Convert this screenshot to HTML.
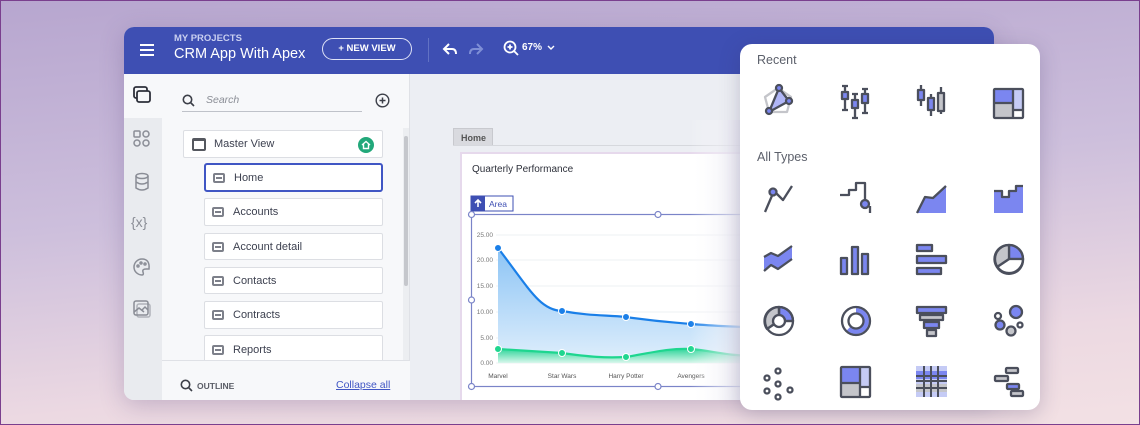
<!DOCTYPE html>
<html><head><meta charset="utf-8"><style>
*{box-sizing:border-box;margin:0;padding:0}
body{width:1140px;height:425px;overflow:hidden;font-family:"Liberation Sans",sans-serif;position:relative;background:linear-gradient(175deg,#b7a6cf 0%,#cdbfdc 45%,#ecd9e2 80%,#f3e1e4 100%)}
.frame{position:absolute;inset:0;border:1px solid #7a3f8e;pointer-events:none;z-index:50}
.abs{position:absolute}
.win{position:absolute;left:124px;top:27px;width:870px;height:373px;border-radius:10px;overflow:hidden;background:#eceef3;box-shadow:0 6px 24px rgba(80,60,120,.25)}
.hdr{position:absolute;left:0;top:0;width:870px;height:47px;background:#3e4fb3;color:#fff}
.rail{position:absolute;left:0;top:47px;width:38px;height:326px;background:#e9ebef}
.panel{position:absolute;left:38px;top:47px;width:248px;height:326px;background:#f7f8fa;border-right:1px solid #dfe1e6}
.item{position:absolute;background:#fff;border:1px solid #dcdee3;border-radius:2px;font-size:11px;color:#3d4150;display:flex;align-items:center}
.pg{width:12px;height:10px;border:2px solid #7d808a;border-radius:2px;margin:0 9px 0 7px;position:relative}
.pg:after{content:"";position:absolute;left:1px;right:1px;top:2px;height:2px;background:#7d808a}
.pop{position:absolute;left:740px;top:44px;width:300px;height:366px;background:#fff;border-radius:12px;box-shadow:0 4px 20px rgba(60,50,100,.25);z-index:10}
.lbl{font-size:12.5px;color:#5c606b;position:absolute;left:17px}
</style></head><body>
<div class="win">
 <div class="hdr">
  <div class="abs" style="left:16px;top:17px;width:14px;height:2px;background:#fff;box-shadow:0 5px 0 #fff,0 10px 0 #fff"></div>
  <div class="abs" style="left:50px;top:6px;font-size:9.5px;font-weight:bold;color:#c9cff0">MY PROJECTS</div>
  <div class="abs" style="left:50px;top:19px;font-size:14.5px">CRM App With Apex</div>
  <div class="abs" style="left:198px;top:11px;width:90px;height:22px;border:1.5px solid #dfe3f7;border-radius:12px;font-size:9.5px;font-weight:bold;text-align:center;line-height:19px">+ NEW VIEW</div>
  <div class="abs" style="left:304px;top:11px;width:1px;height:24px;background:#6272c4"></div>
  <svg class="abs" style="left:318px;top:14px" width="16" height="16" viewBox="0 0 16 16"><path d="M7 3 L2 8 L7 13 M3 8 H10 Q14 8 14 13" stroke="#fff" stroke-width="2" fill="none"/></svg>
  <svg class="abs" style="left:344px;top:14px" width="16" height="16" viewBox="0 0 16 16"><path d="M9 3 L14 8 L9 13 M13 8 H6 Q2 8 2 13" stroke="#7f8fd6" stroke-width="2" fill="none"/></svg>
  <svg class="abs" style="left:379px;top:13px" width="17" height="17" viewBox="0 0 17 17"><circle cx="7" cy="7" r="5.5" stroke="#fff" stroke-width="1.8" fill="none"/><path d="M11 11 L15 15 M4.5 7 H9.5 M7 4.5 V9.5" stroke="#fff" stroke-width="1.8"/></svg>
  <div class="abs" style="left:398px;top:15px;font-size:10px;font-weight:bold">67%</div>
  <svg class="abs" style="left:423px;top:18px" width="8" height="6"><path d="M1 1 L4 4 L7 1" stroke="#fff" stroke-width="1.4" fill="none"/></svg>
 </div>
 <div class="rail">
  <div class="abs" style="left:0;top:0;width:38px;height:44px;background:#f7f8fa"></div>
  <svg class="abs" style="left:8px;top:11px" width="20" height="20" viewBox="0 0 20 20"><rect x="2" y="2" width="13" height="11" rx="2" stroke="#2d303a" stroke-width="1.8" fill="none"/><rect x="5" y="6" width="13" height="11" rx="2" stroke="#2d303a" stroke-width="1.8" fill="#f7f8fa"/></svg>
  <svg class="abs" style="left:8px;top:55px" width="20" height="20" viewBox="0 0 20 20" fill="none" stroke="#8a8d96" stroke-width="1.5"><rect x="2" y="2" width="6" height="6" rx="1"/><circle cx="14" cy="5" r="3"/><circle cx="5" cy="14" r="3"/><circle cx="14" cy="14" r="3"/></svg>
  <svg class="abs" style="left:8px;top:98px" width="20" height="20" viewBox="0 0 20 20" fill="none" stroke="#8a8d96" stroke-width="1.5"><ellipse cx="10" cy="4" rx="6" ry="2.5"/><path d="M4 4 V16 Q10 20 16 16 V4 M4 10 Q10 14 16 10"/></svg>
  <div class="abs" style="left:7px;top:140px;font-size:14px;color:#8a8d96">{x}</div>
  <svg class="abs" style="left:8px;top:183px" width="20" height="20" viewBox="0 0 20 20" fill="none" stroke="#8a8d96" stroke-width="1.5"><path d="M10 2 A8 8 0 1 0 10 18 Q12 18 11 15 Q10 12 14 12 L17 12 Q18 2 10 2Z"/><circle cx="6" cy="9" r="1"/><circle cx="9" cy="6" r="1"/><circle cx="13" cy="7" r="1"/></svg>
  <svg class="abs" style="left:8px;top:225px" width="20" height="20" viewBox="0 0 20 20" fill="none" stroke="#8a8d96" stroke-width="1.5"><rect x="2" y="2" width="14" height="14" rx="2"/><path d="M2 13 L7 9 L12 13 M10 11 L13 8 L16 11"/><rect x="5" y="5" width="13" height="13" rx="2" stroke-opacity=".6"/></svg>
 </div>
 <div class="panel">
  <svg class="abs" style="left:20px;top:20px" width="13" height="13" viewBox="0 0 13 13"><circle cx="5.5" cy="5.5" r="4.2" stroke="#3c3f48" stroke-width="1.6" fill="none"/><path d="M8.5 8.5 L12 12" stroke="#3c3f48" stroke-width="1.6"/></svg>
  <div class="abs" style="left:44px;top:20px;font-size:10.5px;color:#8b8e96;font-style:italic">Search</div>
  <div class="abs" style="left:20px;top:37px;width:180px;height:1px;background:#bfc2c9"></div>
  <svg class="abs" style="left:213px;top:19px" width="15" height="15" viewBox="0 0 15 15"><circle cx="7.5" cy="7.5" r="6.3" stroke="#3c3f48" stroke-width="1.4" fill="none"/><path d="M4.5 7.5 H10.5 M7.5 4.5 V10.5" stroke="#3c3f48" stroke-width="1.5"/></svg>
  <div class="item" style="left:21px;top:56px;width:200px;height:28px"><div style="width:14px;height:13px;border:2px solid #55585f;border-top-width:3.5px;border-radius:2px;margin:0 8px 0 8px"></div>Master View
   <div class="abs" style="right:8px;top:6px;width:16px;height:16px;border-radius:50%;background:#22a87a"><svg width="16" height="16" viewBox="0 0 16 16"><path d="M4 8 L8 4.5 L12 8 M5.5 7 V11.5 H10.5 V7" stroke="#fff" stroke-width="1.4" fill="none"/></svg></div></div>
  <div class="item" style="left:42px;top:89px;width:179px;height:29px;border:2px solid #4056c4;border-radius:3px"><div class="pg"></div>Home</div>
  <div class="item" style="left:42px;top:124px;width:179px;height:28px"><div class="pg"></div>Accounts</div>
  <div class="item" style="left:42px;top:159px;width:179px;height:27px"><div class="pg"></div>Account detail</div>
  <div class="item" style="left:42px;top:193px;width:179px;height:27px"><div class="pg"></div>Contacts</div>
  <div class="item" style="left:42px;top:227px;width:179px;height:28px"><div class="pg"></div>Contracts</div>
  <div class="item" style="left:42px;top:261px;width:179px;height:30px"><div class="pg"></div>Reports</div>
  <div class="abs" style="left:241px;top:54px;width:6px;height:232px;background:#eceef1"></div>
  <div class="abs" style="left:242px;top:62px;width:4px;height:150px;background:#c5c7cc;border-radius:2px"></div>
  <div class="abs" style="left:0;top:286px;width:248px;height:40px;background:#f7f8fa;border-top:1px solid #dfe1e6"></div>
  <svg class="abs" style="left:18px;top:305px" width="13" height="13" viewBox="0 0 13 13"><circle cx="5.5" cy="5.5" r="4.2" stroke="#3c3f48" stroke-width="1.6" fill="none"/><path d="M8.5 8.5 L12 12" stroke="#3c3f48" stroke-width="1.6"/></svg>
  <div class="abs" style="left:35px;top:307px;font-size:8.5px;font-weight:bold;color:#5a5d66">OUTLINE</div>
  <div class="abs" style="left:174px;top:305px;font-size:10.5px;color:#4056c4;text-decoration:underline">Collapse all</div>
 </div>
 <div class="abs" style="left:329px;top:101px;width:40px;height:18px;background:#d9dadf;border:1px solid #c8c9ce;font-size:9px;font-weight:bold;color:#555;padding:4px 0 0 7px">Home</div>
 <div class="abs" style="left:329px;top:118px;width:541px;height:1px;background:#d6d8dd"></div>
 <div class="abs" style="left:336px;top:125px;width:540px;height:250px;background:#fff;border:2px solid #e6d9ec"></div>
 <div class="abs" style="left:348px;top:137px;font-size:10px;color:#2d303a">Quarterly Performance</div>
</div>
<svg class="abs" style="left:0;top:0" width="1140" height="425">
 <defs><linearGradient id="bg" x1="0" y1="0" x2="0" y2="1"><stop offset="0" stop-color="#8cc4f5"/><stop offset="1" stop-color="#e0effc"/></linearGradient>
 <linearGradient id="gg" x1="0" y1="0" x2="0" y2="1"><stop offset="0" stop-color="#2fd59a"/><stop offset="1" stop-color="#d9f7ec"/></linearGradient>
 <linearGradient id="fade" x1="0" y1="0" x2="1" y2="0"><stop offset="0" stop-color="#fff" stop-opacity="0"/><stop offset="1" stop-color="#e3e2ee" stop-opacity="1"/></linearGradient></defs>
 <rect x="471" y="196" width="42" height="15" fill="#fff" stroke="#3e4fb3"/><rect x="471" y="196" width="14" height="15" fill="#3e4fb3"/>
 <path d="M478 207 V200 M475 203 L478 200 L481 203" stroke="#fff" stroke-width="1.6" fill="none"/>
 <text x="489" y="207" font-size="8.5" fill="#3e4fb3" font-family="Liberation Sans">Area</text>
 <rect x="471.5" y="214.5" width="300" height="172" fill="none" stroke="#7a84c8" stroke-width="1.2"/>
 <g stroke="#eef0f3"><line x1="496" y1="235" x2="760" y2="235"/><line x1="496" y1="260" x2="760" y2="260"/><line x1="496" y1="286" x2="760" y2="286"/><line x1="496" y1="312" x2="760" y2="312"/><line x1="496" y1="338" x2="760" y2="338"/><line x1="496" y1="363" x2="760" y2="363"/></g>
 <g font-size="6.5" fill="#777" font-family="Liberation Sans" text-anchor="end"><text x="493" y="237">25.00</text><text x="493" y="262">20.00</text><text x="493" y="288">15.00</text><text x="493" y="314">10.00</text><text x="493" y="340">5.00</text><text x="493" y="365">0.00</text></g>
 <path d="M498 248 C530 290 540 310 562 311 C590 316 605 315 626 317 C660 322 670 322 691 324 C715 326 725 326 760 328 V363 H498Z" fill="url(#bg)"/>
 <path d="M498 248 C530 290 540 310 562 311 C590 316 605 315 626 317 C660 322 670 322 691 324 C715 326 725 326 760 328" stroke="#1a7fe8" stroke-width="2.2" fill="none"/>
 <path d="M498 349 L562 353 C590 357 605 358 626 357 C655 352 670 348 691 349 C715 351 725 356 760 356 V363 H498Z" fill="url(#gg)"/>
 <path d="M498 349 L562 353 C590 357 605 358 626 357 C655 352 670 348 691 349 C715 351 725 356 760 356" stroke="#1ed68f" stroke-width="2.2" fill="none"/>
 <g fill="#1a7fe8" stroke="#fff" stroke-width="1"><circle cx="498" cy="248" r="3.5"/><circle cx="562" cy="311" r="3.5"/><circle cx="626" cy="317" r="3.5"/><circle cx="691" cy="324" r="3.5"/></g>
 <g fill="#1ed68f" stroke="#fff" stroke-width="1"><circle cx="498" cy="349" r="3.5"/><circle cx="562" cy="353" r="3.5"/><circle cx="626" cy="357" r="3.5"/><circle cx="691" cy="349" r="3.5"/></g>
 <g font-size="6.5" fill="#555" font-family="Liberation Sans" text-anchor="middle"><text x="498" y="378">Marvel</text><text x="562" y="378">Star Wars</text><text x="626" y="378">Harry Potter</text><text x="691" y="378">Avengers</text></g>
 <g fill="#fff" stroke="#7a84c8" stroke-width="1.2"><circle cx="471.5" cy="214.5" r="3"/><circle cx="658" cy="214.5" r="3"/><circle cx="471.5" cy="300" r="3"/><circle cx="471.5" cy="386.5" r="3"/><circle cx="658" cy="386.5" r="3"/></g>
 <rect x="690" y="120" width="60" height="280" fill="url(#fade)"/>
</svg>
<div class="pop">
 <div class="lbl" style="top:9px">Recent</div>
 <div class="lbl" style="top:106px">All Types</div>
 <svg class="abs" style="left:0;top:0" width="300" height="366" fill="none" stroke="#4b4f5c" stroke-width="2.3" stroke-linejoin="round">
  <g transform="translate(23,40)"><path d="M15 4 L28 13 L24 28 L6 28 L2 13Z" stroke="#c4c5ca"/><path d="M16 4 L26 17 L6 28Z" fill="#7b86f0" fill-opacity=".6"/><circle cx="16" cy="4" r="3" fill="#7b86f0"/><circle cx="26" cy="17" r="3" fill="#7b86f0"/><circle cx="6" cy="27" r="3" fill="#7b86f0"/></g>
  <g transform="translate(100,40)"><path d="M5 2V26 M2 2H8 M2 26H8 M15 10V34 M12 34H18 M12 10H18 M25 5V29 M22 5H28 M22 29H28"/><rect x="2" y="8" width="6" height="7" fill="#7b86f0"/><rect x="12" y="16" width="6" height="8" fill="#7b86f0"/><rect x="22" y="10" width="6" height="9" fill="#7b86f0"/></g>
  <g transform="translate(176,40)"><path d="M5 1V22 M15 10V32 M25 3V30"/><rect x="2" y="6" width="6" height="10" fill="#7b86f0"/><rect x="12" y="14" width="6" height="12" fill="#7b86f0"/><rect x="22" y="9" width="6" height="18" fill="#c4c5ca"/></g>
  <g transform="translate(253,40)"><rect x="2" y="6" width="18" height="13" fill="#7b86f0" stroke="none"/><rect x="2" y="20" width="18" height="13" fill="#c4c5ca" stroke="none"/><rect x="21" y="6" width="8" height="19" fill="#c5cbf5" stroke="none"/><path d="M20 5V34 M1 19H20 M20 26H30"/><rect x="1" y="5" width="29" height="29" rx="1"/></g>
  <g transform="translate(23,138)"><path d="M2 30 L11 9 L20 18 L29 4"/><circle cx="10" cy="10" r="3.5" fill="#7b86f0"/></g>
  <g transform="translate(100,138)"><path d="M0 13H9V8H16V1H25V18 M30 24V31"/><circle cx="25" cy="22" r="4" fill="#7b86f0"/></g>
  <g transform="translate(176,138)"><path d="M1 31 L9 15 L17 16 L30 4 V31Z" fill="#7b86f0" stroke="none"/><path d="M1 31 L9 15 L17 16 L30 4"/></g>
  <g transform="translate(253,138)"><path d="M1 31V9H9V15H16V9H23V4H30V31Z" fill="#7b86f0" stroke="none"/><path d="M1 9H9V15H16V9H23V4H30"/></g>
  <g transform="translate(23,199)"><path d="M1 14 L8 10 L15 13 L29 3 V16 L15 26 L8 22 L1 28Z" fill="#7b86f0" stroke="none"/><path d="M1 14 L8 10 L15 13 L29 3 M1 28 L8 22 L15 26 L29 16"/></g>
  <g transform="translate(100,199)"><rect x="1" y="15" width="6" height="16" fill="#7b86f0"/><rect x="12" y="4" width="6" height="27" fill="#7b86f0"/><rect x="22" y="11" width="6" height="20" fill="#7b86f0"/></g>
  <g transform="translate(176,199)"><rect x="1" y="2" width="15" height="6" fill="#7b86f0"/><rect x="1" y="13" width="29" height="7" fill="#7b86f0"/><rect x="1" y="25" width="24" height="6" fill="#7b86f0"/></g>
  <g transform="translate(253,199)"><path d="M16 16 L16 2 A14 14 0 0 1 30 16Z" fill="#7b86f0"/><path d="M16 16 L30 16 A14 14 0 0 1 4 24Z" fill="#fff"/><path d="M16 16 L4 24 A14 14 0 0 1 16 2Z" fill="#c4c5ca"/><circle cx="16" cy="16" r="14"/></g>
  <g transform="translate(23,261)"><path d="M16 16 L16 2 A14 14 0 0 1 30 16Z" fill="#7b86f0"/><path d="M16 16 L4 24 A14 14 0 0 1 16 2Z" fill="#c4c5ca"/><circle cx="16" cy="16" r="14"/><circle cx="16" cy="16" r="6" fill="#fff"/><path d="M16 2V10 M22 16H30 M11 19 L4 24"/></g>
  <g transform="translate(100,261)"><path d="M16 5.5 A10.5 10.5 0 1 1 8.5 23.5" stroke="#7b86f0" stroke-width="5"/><path d="M16 5.5 A10.5 10.5 0 0 0 8.5 23.5" stroke="#fff" stroke-width="4.5"/><circle cx="16" cy="16" r="14"/><circle cx="16" cy="16" r="7.5"/></g>
  <g transform="translate(176,261)"><rect x="1" y="2" width="29" height="6" fill="#7b86f0"/><rect x="4" y="10" width="23" height="5" fill="#c4c5ca"/><rect x="8" y="17" width="15" height="6" fill="#7b86f0"/><rect x="11" y="25" width="9" height="6" fill="#c4c5ca"/></g>
  <g transform="translate(253,261)"><circle cx="23" cy="7" r="6" fill="#7b86f0"/><circle cx="5" cy="11" r="3"/><circle cx="7" cy="20" r="4.5" fill="#7b86f0"/><circle cx="18" cy="26" r="4.5" fill="#c4c5ca"/><circle cx="27" cy="20" r="2.5"/></g>
  <g transform="translate(23,322)"><circle cx="15" cy="5" r="2.5"/><circle cx="4" cy="12" r="2.5"/><circle cx="15" cy="18" r="2.5"/><circle cx="4" cy="25" r="2.5"/><circle cx="27" cy="24" r="2.5"/><circle cx="15" cy="31" r="2.5"/></g>
  <g transform="translate(100,322)"><rect x="2" y="2" width="18" height="15" fill="#7b86f0" stroke="none"/><rect x="2" y="17" width="18" height="14" fill="#c4c5ca" stroke="none"/><rect x="20" y="2" width="9" height="18" fill="#c5cbf5" stroke="none"/><path d="M20 1V31 M1 17H20 M20 21H30"/><rect x="1" y="1" width="29" height="30" rx="1"/></g>
  <g transform="translate(176,322)"><rect x="0" y="0" width="31" height="31" fill="#c5cbf5" stroke="none"/><rect x="0" y="5" width="31" height="8" fill="#7b86f0" stroke="none"/><rect x="0" y="18" width="31" height="8" fill="#c4c5ca" stroke="none"/><path d="M8 0V31 M15 0V31 M22 0V31 M0 10H31 M0 15H31 M0 22H31" stroke-width="2"/></g>
  <g transform="translate(253,322)"><rect x="13" y="2" width="12" height="5" rx="1" fill="#c4c5ca"/><rect x="2" y="10" width="13" height="5" rx="1" fill="#c4c5ca"/><rect x="14" y="18" width="12" height="5" rx="1" fill="#7b86f0"/><rect x="18" y="25" width="12" height="5" rx="1" fill="#c4c5ca"/></g>
 </svg>
</div>
<div class="frame"></div>
</body></html>
